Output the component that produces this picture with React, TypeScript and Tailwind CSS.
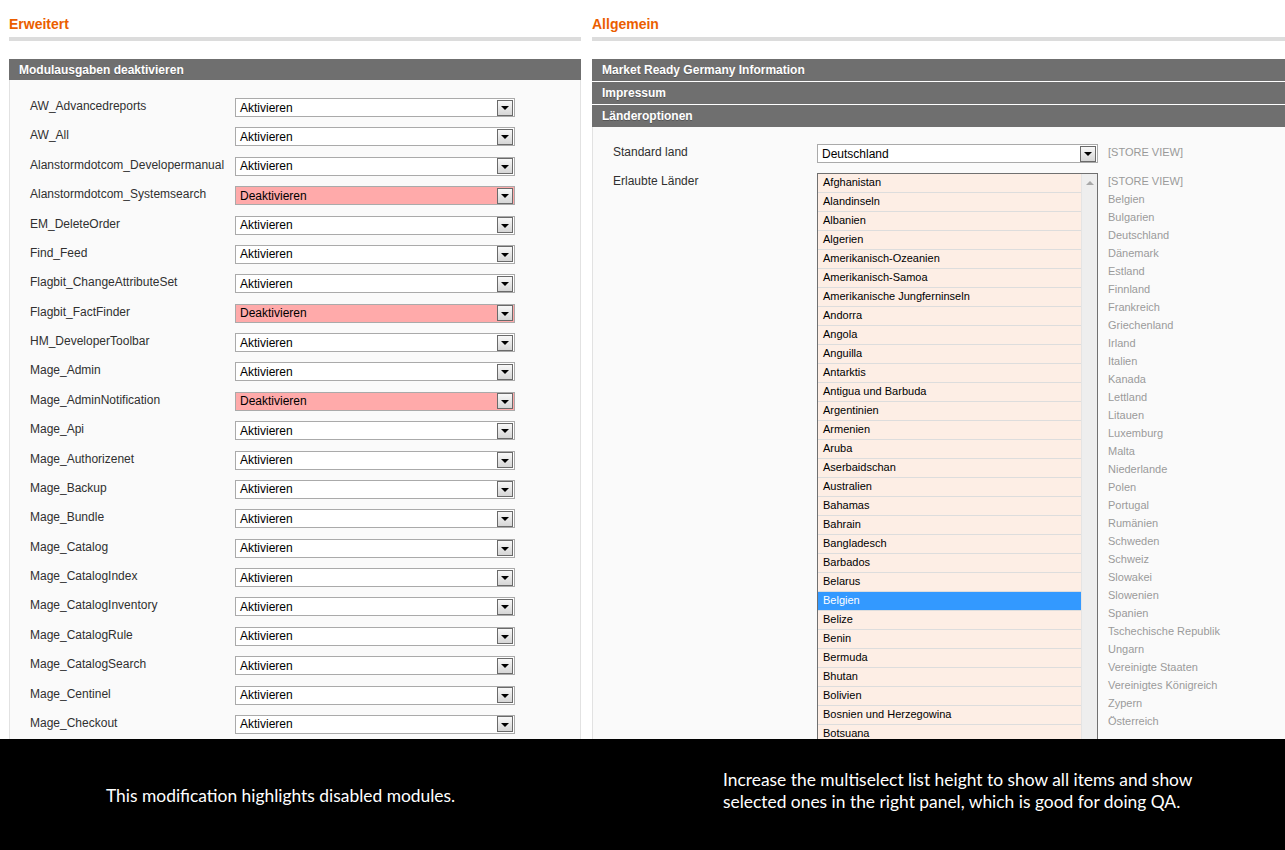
import React from 'react';

const modules: [string, boolean][] = [
  ['AW_Advancedreports', false],
  ['AW_All', false],
  ['Alanstormdotcom_Developermanual', false],
  ['Alanstormdotcom_Systemsearch', true],
  ['EM_DeleteOrder', false],
  ['Find_Feed', false],
  ['Flagbit_ChangeAttributeSet', false],
  ['Flagbit_FactFinder', true],
  ['HM_DeveloperToolbar', false],
  ['Mage_Admin', false],
  ['Mage_AdminNotification', true],
  ['Mage_Api', false],
  ['Mage_Authorizenet', false],
  ['Mage_Backup', false],
  ['Mage_Bundle', false],
  ['Mage_Catalog', false],
  ['Mage_CatalogIndex', false],
  ['Mage_CatalogInventory', false],
  ['Mage_CatalogRule', false],
  ['Mage_CatalogSearch', false],
  ['Mage_Centinel', false],
  ['Mage_Checkout', false],
];

const countries = [
  'Afghanistan', 'Alandinseln', 'Albanien', 'Algerien', 'Amerikanisch-Ozeanien',
  'Amerikanisch-Samoa', 'Amerikanische Jungferninseln', 'Andorra', 'Angola', 'Anguilla',
  'Antarktis', 'Antigua und Barbuda', 'Argentinien', 'Armenien', 'Aruba', 'Aserbaidschan',
  'Australien', 'Bahamas', 'Bahrain', 'Bangladesch', 'Barbados', 'Belarus', 'Belgien',
  'Belize', 'Benin', 'Bermuda', 'Bhutan', 'Bolivien', 'Bosnien und Herzegowina', 'Botsuana',
];

const selected = [
  '[STORE VIEW]', 'Belgien', 'Bulgarien', 'Deutschland', 'Dänemark', 'Estland', 'Finnland',
  'Frankreich', 'Griechenland', 'Irland', 'Italien', 'Kanada', 'Lettland', 'Litauen',
  'Luxemburg', 'Malta', 'Niederlande', 'Polen', 'Portugal', 'Rumänien', 'Schweden', 'Schweiz',
  'Slowakei', 'Slowenien', 'Spanien', 'Tschechische Republik', 'Ungarn', 'Vereinigte Staaten',
  'Vereinigtes Königreich', 'Zypern', 'Österreich',
];

const Arrow = () => (
  <div className="w-[16px] h-[16px] mr-[1px] border border-[#6a6a6a] bg-gradient-to-b from-[#f8f8f8] to-[#d6d6d6] flex items-center justify-center">
    <div className="w-0 h-0 border-l-[4px] border-r-[4px] border-t-[4px] border-l-transparent border-r-transparent border-t-black mt-[1px]" />
  </div>
);

const Select = ({ value, off, w }: { value: string; off?: boolean; w: string }) => (
  <div
    className={`${w} h-[19px] border border-[#aaaaaa] flex items-center justify-between ${
      off ? 'bg-[#ffaaaa]' : 'bg-white'
    }`}
  >
    <span className="pl-[4px] text-[12px] text-black leading-none">{value}</span>
    <Arrow />
  </div>
);

const Heading = ({ children }: { children: React.ReactNode }) => (
  <div>
    <div className="pt-[16px] h-[37px] text-[14px] leading-[16px] font-bold text-[#eb5e00]">{children}</div>
    <div className="h-[4px] bg-[#dcdcdc]" />
  </div>
);

const Bar = ({ children, tall }: { children: React.ReactNode; tall?: boolean }) => (
  <div
    className={`${tall ? 'h-[22px]' : 'h-[21px]'} mb-[1px] bg-[#6f6f6f] pl-[10px] flex items-center text-[12px] font-bold text-white [text-shadow:0_1px_0_#555]`}
  >
    {children}
  </div>
);

export default function App() {
  return (
    <div className="w-[1285px] h-[850px] overflow-hidden bg-white flex flex-col font-['Liberation_Sans',Arial,sans-serif]">
      <div className="h-[739px] overflow-hidden flex pl-[9px] gap-[11px]">
        {/* left */}
        <div className="w-[572px] shrink-0 flex flex-col">
          <Heading>Erweitert</Heading>
          <div className="mt-[18px]">
            <Bar>Modulausgaben deaktivieren</Bar>
          </div>
          <div className="flex-1 -mt-[1px] bg-[#fafafa] border-x border-[#e2e2e2] pt-[18px] pl-[20px]">
            {modules.map(([name, off]) => (
              <div key={name} className="h-[29.38px] flex">
                <div className="w-[205px] pt-[1px] text-[12px] leading-[14px] text-[#303030] whitespace-nowrap">{name}</div>
                <Select value={off ? 'Deaktivieren' : 'Aktivieren'} off={off} w="w-[280px]" />
              </div>
            ))}
          </div>
        </div>
        {/* right */}
        <div className="w-[720px] shrink-0 flex flex-col">
          <Heading>Allgemein</Heading>
          <div className="mt-[18px]">
            <Bar tall>Market Ready Germany Information</Bar>
            <Bar tall>Impressum</Bar>
            <Bar tall>Länderoptionen</Bar>
          </div>
          <div className="flex-1 -mt-[1px] bg-[#fafafa] border-l border-[#e2e2e2] pt-[17px] pl-[20px]">
            <div className="flex h-[29px]">
              <div className="w-[204px] pt-[1px] text-[12px] leading-[14px] text-[#303030]">Standard land</div>
              <Select value="Deutschland" w="w-[281px]" />
              <div className="ml-[10px] pt-[2px] text-[11px] leading-[13px] text-[#999999]">[STORE VIEW]</div>
            </div>
            <div className="flex">
              <div className="w-[204px] pt-[1px] text-[12px] leading-[14px] text-[#303030]">Erlaubte Länder</div>
              <div className="w-[281px] h-[600px] border border-[#707070] flex bg-[#eeeeee]">
                <div className="flex-1 bg-[#fdeee5]">
                  {countries.map((c) => (
                    <div
                      key={c}
                      className={`h-[19px] border-b border-[#dddddd] pl-[5px] pb-[1px] flex items-center text-[11px] ${
                        c === 'Belgien' ? 'bg-[#3399ff] text-white' : 'text-black'
                      }`}
                    >
                      {c}
                    </div>
                  ))}
                </div>
                <div className="w-[16px] border-l border-[#e4e4e4] flex justify-center pt-[7px]">
                  <div className="w-0 h-0 border-l-[4px] border-r-[4px] border-b-[4px] border-l-transparent border-r-transparent border-b-[#a8a8a8]" />
                </div>
              </div>
              <div className="ml-[10px] pt-[2px] flex flex-col">
                {selected.map((s) => (
                  <div key={s} className="h-[18px] text-[11px] leading-[13px] text-[#9a9a9a]">
                    {s}
                  </div>
                ))}
              </div>
            </div>
          </div>
        </div>
      </div>
      <div className="flex-1 bg-black flex text-white font-['Lato',sans-serif] text-[17.4px] leading-[22px]">
        <div className="w-[592px] pl-[106px] pt-[46px]">This modification highlights disabled modules.</div>
        <div className="pl-[131px] pt-[30px]">
          Increase the multiselect list height to show all items and show
          <br />
          selected ones in the right panel, which is good for doing QA.
        </div>
      </div>
    </div>
  );
}
